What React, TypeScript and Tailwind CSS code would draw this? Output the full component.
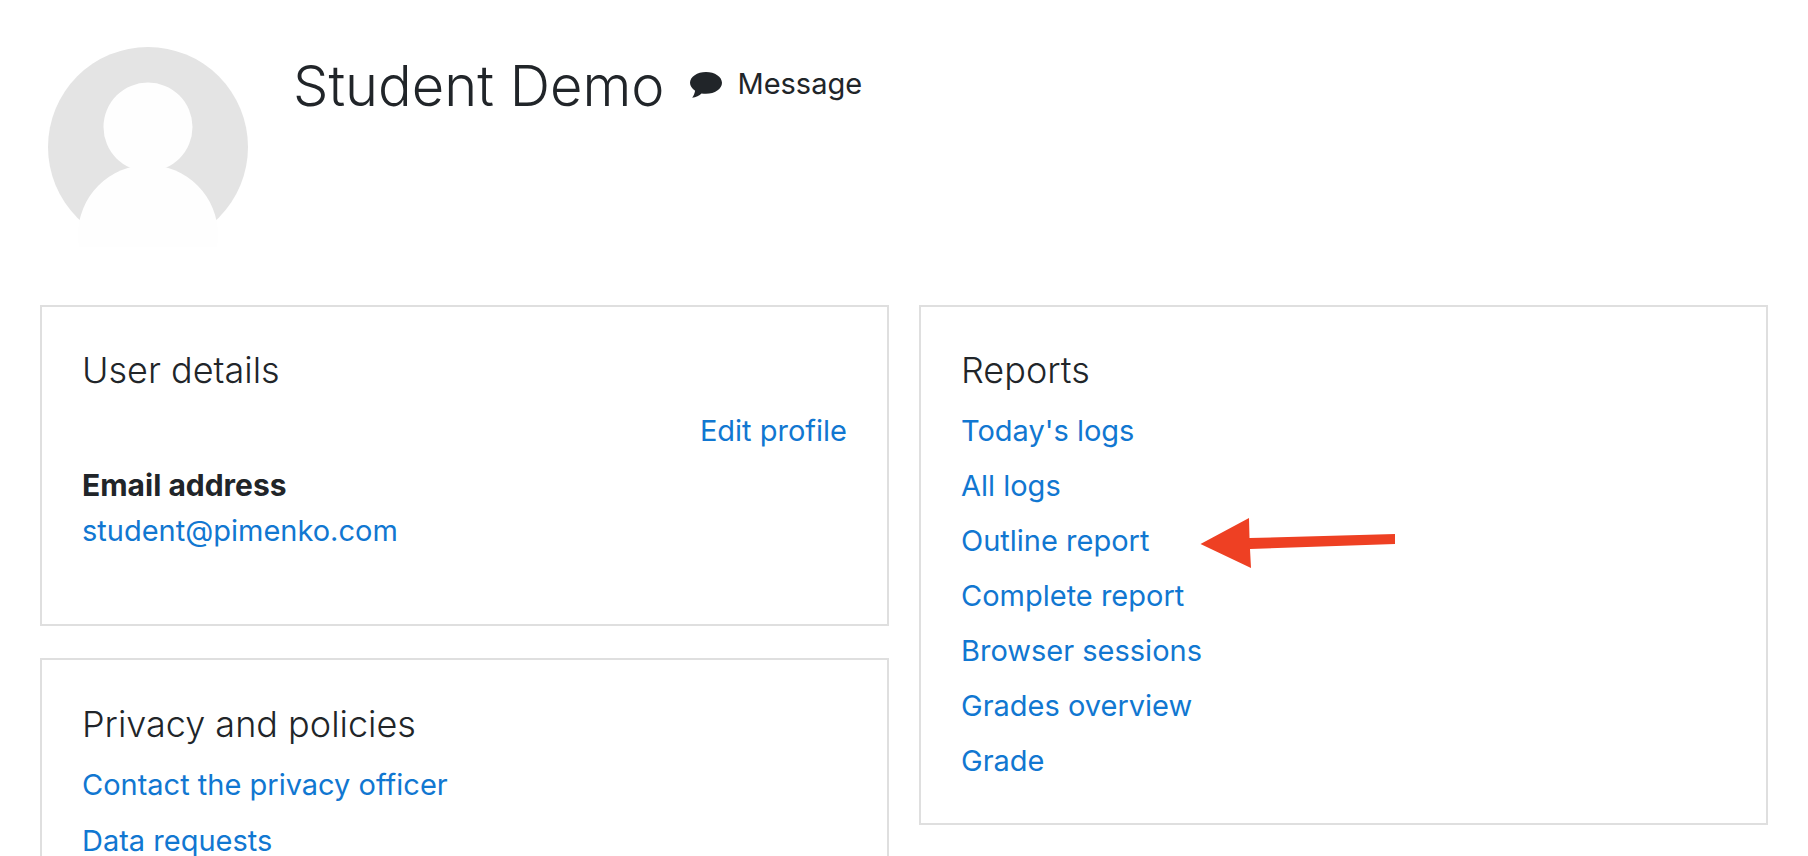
import React from "react";

function Card({ title, children, className = "" }: { title: string; children: React.ReactNode; className?: string }) {
  return (
    <section className={`border-2 border-[#dfdfdf] bg-white pl-[40px] pr-[40px] ${className}`}>
      <h3 className="text-[36px] leading-[48px] font-light text-[#212529]">{title}</h3>
      {children}
    </section>
  );
}

function L({ children }: { children: React.ReactNode }) {
  return <a className="block h-[55px] text-[#1177d1] leading-[55px]">{children}</a>;
}

export default function App() {
  const reports = ["Today's logs", "All logs", "Outline report", "Complete report", "Browser sessions", "Grades overview", "Grade"];
  return (
    <div className="relative h-[856px] w-[1808px] overflow-hidden bg-white px-[40px] text-[29px] text-[#212529] font-['Inter','Liberation_Sans',sans-serif]">
      <header className="flex h-[305px] items-start pl-[8px] pt-[47px]">
        <svg width="200" height="200" viewBox="0 0 200 200" className="shrink-0">
          <circle cx="100" cy="100" r="100" fill="#e4e4e4" />
          <circle cx="100" cy="80" r="44.500" fill="#fefefe" className="blur-[0.6px]" />
          <circle cx="100" cy="188" r="70" fill="#fefefe" className="blur-[0.6px]" />
        </svg>
        <h1 className="ml-[45px] mt-[9px] text-[56px] leading-[60px] font-light">Student Demo</h1>
        <a className="ml-[26px] mt-[17px] flex items-center gap-[15px] leading-[40px]">
          <svg width="32" height="26" viewBox="0 0 32 26" className="mt-[2px]">
            <path d="M16 0C7.200 0 0 4.900 0 10.800c0 3.100 2 5.900 5.100 7.900C4.800 21 3.500 23.900 2.200 25.800c3.700-.4 7.300-2.600 9.300-4.400 1.400.3 2.900.4 4.500.4 8.800 0 16-4.900 16-11C32 4.900 24.800 0 16 0z" fill="#212529" />
          </svg>
          Message
        </a>
      </header>
      <div className="grid grid-cols-[849px_849px] gap-[30px]">
        <div className="flex flex-col gap-[32px]">
          <Card title="User details" className="h-[321px] pt-[39px]">
            <div className="mt-[9px] text-right"><L>Edit profile</L></div>
            <div className="font-bold leading-[55px] text-[#212529] text-[30px]">Email address</div>
            <a className="block leading-[36px] text-[#1177d1]">student@pimenko.com</a>
          </Card>
          <Card title="Privacy and policies" className="h-[400px] pt-[40px]">
            <div className="mt-[9px]">
              <L>Contact the privacy officer</L>
              <div className="mt-[1px]"><L>Data requests</L></div>
            </div>
          </Card>
        </div>
        <Card title="Reports" className="h-[520px] pt-[39px]">
          <div className="mt-[9px]">
            {reports.map((r) => <L key={r}>{r}</L>)}
          </div>
        </Card>
      </div>
      <svg className="absolute left-[1200px] top-[517px]" width="196" height="52" viewBox="0 0 196 52">
        <polygon points="0.500,27 49,1 49.500,21 195,17 195,27 50,32 51,51" fill="#ee4023" />
      </svg>
    </div>
  );
}
